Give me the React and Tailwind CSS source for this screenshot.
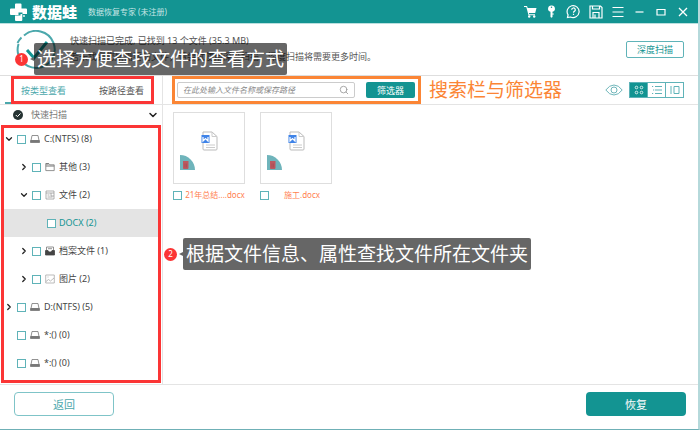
import clsx from "clsx";
import { ChevronDown, ChevronRight, Search } from "lucide-react";

const tree = [
  { id: "c", label: "C:(NTFS) (8)", icon: "disk", level: 0, arrow: "down" },
  { id: "other", label: "其他 (3)", icon: "folder", level: 1, arrow: "right" },
  { id: "file", label: "文件 (2)", icon: "file", level: 1, arrow: "down" },
  { id: "docx", label: "DOCX (2)", level: 2, active: true },
  { id: "archive", label: "档案文件 (1)", icon: "archive", level: 1, arrow: "right" },
  { id: "image", label: "图片 (2)", icon: "image", level: 1, arrow: "right" },
  { id: "d", label: "D:(NTFS) (5)", icon: "disk", level: 0, arrow: "right" },
  { id: "x1", label: "*:() (0)", icon: "disk", level: 0 },
  { id: "x2", label: "*:() (0)", icon: "disk", level: 0 },
];

const files = [
  { id: "f1", name: "21年总结....docx" },
  { id: "f2", name: "施工.docx" },
];

function Logo() {
  return (
    <svg className="h-5 w-5 shrink-0" viewBox="0 0 20 20" fill="#fff">
      <path d="M7 1.500h4.500a1 1 0 0 1 1 1v4H17a1 1 0 0 1 1 1v4.500h-4.500v-1.500H9.500V13H2a1 1 0 0 1-1-1V7.500a1 1 0 0 1 1-1h4v-4a1 1 0 0 1 1-1z" />
      <path d="M6 13.500h5.500V12h1.800v6a1 1 0 0 1-1 1H7a1 1 0 0 1-1-1z" />
      <circle cx="15" cy="14" r="0.900" />
    </svg>
  );
}

function TreeIcon({ name }) {
  return (
    <svg className="h-[10px] w-[10px] shrink-0" viewBox="0 0 10 10" fill="none" stroke="#777" strokeWidth="0.8">
      {name === "disk" && (
        <>
          <path d="M2 1.500h6l1 5h-8z" />
          <path d="M0.500 6.500h9v2h-9z" fill="#777" />
        </>
      )}
      {name === "folder" && (
        <>
          <path d="M0.800 8.600v-7h3l1 1.200h4.400v5.800z" />
          <path d="M0.800 4h8.400M0.800 1.800h3" strokeWidth="1.200" />
        </>
      )}
      {name === "file" && (
        <>
          <path d="M1 1h8v8h-8zM1 3h8" stroke="#999" />
          <path d="M2.500 5h2M2.500 7h5M6 3v3h3" stroke="#999" />
        </>
      )}
      {name === "archive" && (
        <>
          <path d="M1.500 4.500v-3.500h7v3.500M3 2.700h4" />
          <path d="M0.500 4.500h2.500l1 1.500h2l1-1.500h2.500v4.500h-9z" fill="#444" stroke="#444" />
        </>
      )}
      {name === "image" && (
        <>
          <path d="M0.700 1h8.600v8h-8.600z" stroke="#aaa" />
          <path d="M1 7.500l2.500-2 2 1.500 3.500-3M2.500 3h1" stroke="#aaa" />
        </>
      )}
    </svg>
  );
}

function CheckBox({ label }) {
  return (
    <input
      type="checkbox"
      aria-label={label}
      className="h-[9px] w-[9px] shrink-0 appearance-none border border-[#5fb3b8] bg-white checked:bg-[#139492]"
    />
  );
}

function TreeRow({ item }) {
  return (
    <li
      className={clsx(
        "flex h-7 items-center",
        item.level === 1 && "pl-[15px]",
        item.level === 2 && "pl-[30px]",
        item.active && "bg-[#e4e4e4]"
      )}
    >
      <span className="flex w-[13px] shrink-0 items-center text-[#222]">
        {item.arrow === "down" && <ChevronDown size={10} strokeWidth={3} />}
        {item.arrow === "right" && <ChevronRight size={10} strokeWidth={3} />}
      </span>
      <label className="flex items-center">
        <CheckBox label={item.label} />
        {item.icon && (
          <span className="ml-1">
            <TreeIcon name={item.icon} />
          </span>
        )}
        <span className={clsx("text-[9px] leading-3", item.icon ? "ml-1" : "ml-[3px]", item.active ? "text-[#139492]" : "text-[#444]")}>
          {item.label}
        </span>
      </label>
    </li>
  );
}

function WordFile() {
  return (
    <svg className="h-5 w-[17px]" viewBox="0 0 17 20" fill="none">
      <path d="M2 1h9l5 4.500V18a1 1 0 0 1-1 1H3a1 1 0 0 1-1-1z" fill="#fff" stroke="#bbb" />
      <path d="M11 1v4.500h5M5 14h9M5 16.500h9" stroke="#ccc" />
      <rect x="0.500" y="4" width="8" height="8" fill="#3f83e8" />
      <path d="M2 6v4l2.500-2.500L7 10V6" stroke="#fff" strokeWidth="1.200" />
    </svg>
  );
}

function FileCard({ file }) {
  return (
    <li className="w-[72px]">
      <div className="relative flex h-[72px] items-center justify-center border border-[#dedede] bg-white pb-[14px]">
        <WordFile />
        <svg className="absolute bottom-[13px] left-[6px] h-[15px] w-[15px]" viewBox="0 0 15 15">
          <path d="M0 0a15 15 0 0 1 15 15H0z" fill="#6fb4bb" />
          <path d="M3.500 7h4.500v6.500H3.500zM3 6.500h5.500" fill="#bd5960" stroke="#bd5960" />
          <path d="M5 8.500v4M6.600 8.500v4" stroke="#a3474f" strokeWidth="0.600" />
        </svg>
      </div>
      <label className="mt-[5px] flex items-center gap-[3px]">
        <CheckBox label={file.name} />
        <span className="min-w-0 flex-1 whitespace-nowrap text-center text-[8px] leading-3 text-[#ff7f50]">{file.name}</span>
      </label>
    </li>
  );
}

function WindowButtons() {
  const button = "flex h-5 items-center justify-center";
  return (
    <div className="flex items-center gap-2 pr-[10px]">
      <button aria-label="购物车" className={button}>
        <svg className="h-[13px] w-[13px]" viewBox="0 0 13 13" fill="#fff">
          <path d="M0 1h3l.7 2H12.500l-1.300 5H4.800l.5 1.200H11v1H4.500L2.300 2H0z" />
          <circle cx="5.200" cy="11.500" r="1.200" />
          <circle cx="10.200" cy="11.500" r="1.200" />
        </svg>
      </button>
      <button aria-label="注册" className={button}>
        <svg className="h-[13px] w-[13px]" viewBox="0 0 13 13" fill="#fff">
          <path fillRule="evenodd" d="M6.500.5a3.200 3.200 0 0 1 1 6.300V12l-1 .8-1-.8V6.800a3.200 3.200 0 0 1 1-6.300zm0 1a.7.7 0 0 0 0 1.500.7.7 0 0 0 0-1.500z" />
          <path d="M7 8.500h1.800v1H7z" />
        </svg>
      </button>
      <button aria-label="帮助" className={button}>
        <svg className="h-[15px] w-[15px]" viewBox="0 0 15 15" fill="none" stroke="#fff" strokeWidth="1.200">
          <path d="M1.500 13.500l.6-2.600a6 6 0 1 1 2.400 2.100z" />
          <path d="M5.700 5.800a1.800 1.800 0 1 1 2.600 1.600q-.8.400-.8 1.300M7.500 9.800v1.200" />
        </svg>
      </button>
      <button aria-label="保存" className={button}>
        <svg className="h-[14px] w-[14px]" viewBox="0 0 14 14" fill="none" stroke="#fff" strokeWidth="1.200">
          <path d="M1 1h10.500L13 2.500V13H1zM4 13V7.500h6V13M3.500 1v3h7V1M6 9.500V13" />
        </svg>
      </button>
      <button aria-label="菜单" className={clsx(button, "ml-px")}>
        <svg className="h-3 w-3" viewBox="0 0 12 12" stroke="#fff" strokeWidth="1.200">
          <path d="M.5 1.500h11M.5 6h11M.5 10.500h11" />
        </svg>
      </button>
      <button aria-label="最小化" className={clsx(button, "ml-[3px]")}>
        <svg className="h-[10px] w-[9px]" viewBox="0 0 9 10" stroke="#fff" strokeWidth="1.200">
          <path d="M.5 5h8" />
        </svg>
      </button>
      <button aria-label="最大化" className={clsx(button, "ml-1")}>
        <svg className="h-[10px] w-[10px]" viewBox="0 0 10 10" fill="none" stroke="#fff" strokeWidth="1.200">
          <path d="M1 2.500h8v5.500H1z" />
        </svg>
      </button>
      <button aria-label="关闭" className={clsx(button, "ml-1")}>
        <svg className="h-[10px] w-[10px]" viewBox="0 0 10 10" stroke="#fff" strokeWidth="1.300">
          <path d="M1 1l8 8M9 1l-8 8" />
        </svg>
      </button>
    </div>
  );
}

function ViewButtons() {
  return (
    <div className="flex items-center gap-[6px]">
      <button aria-label="预览">
        <svg className="h-3 w-[18px]" viewBox="0 0 18 12" fill="none" stroke="#6fb6ba">
          <path d="M.8 6Q4.500 1 9 1t8.200 5Q13.500 11 9 11T.8 6z" />
          <circle cx="9" cy="6" r="3" />
        </svg>
      </button>
      <div className="flex h-4 divide-x divide-[#5fb3b8] border border-[#5fb3b8]">
        <button aria-label="图标视图" className="flex w-[18px] items-center justify-center bg-[#139492]">
          <svg className="h-[10px] w-[10px]" viewBox="0 0 10 10" fill="none" stroke="#d8eeee">
            <circle cx="2.500" cy="2.500" r="1.300" />
            <circle cx="7.500" cy="2.500" r="1.300" />
            <circle cx="2.500" cy="7.500" r="1.300" />
            <circle cx="7.500" cy="7.500" r="1.300" />
          </svg>
        </button>
        <button aria-label="列表视图" className="flex w-[18px] items-center justify-center">
          <svg className="h-[10px] w-[10px]" viewBox="0 0 10 10" stroke="#5fb3b8">
            <path d="M0 1.500h1.200M3 1.500h7M1 5h1.200M3 5h7M0 8.500h1.200M3 8.500h7" />
          </svg>
        </button>
        <button aria-label="详情视图" className="flex w-[17px] items-center justify-center">
          <svg className="h-[10px] w-[10px]" viewBox="0 0 10 10" fill="none" stroke="#5fb3b8">
            <path d="M1 1v8M4 1.500h5v7H4z" />
          </svg>
        </button>
      </div>
    </div>
  );
}

// numbered callout: red dot and a dark caption beside it
function Callout({ number, text, className }) {
  return (
    <div className={clsx("absolute z-10 flex items-center", className)}>
      <span className="flex h-[13px] w-[13px] items-center justify-center rounded-full bg-[#fb3535] text-[8px] leading-none text-white">{number}</span>
      <span className="ml-[2px] h-0 w-0 border-y-2 border-r-4 border-y-transparent border-r-[#666]" />
      <span className="rounded-xs bg-black/60 px-[3px] text-[19px] leading-8 whitespace-nowrap text-white">{text}</span>
    </div>
  );
}

export default function App() {
  return (
    <div className="relative flex min-h-screen flex-col border-r-2 border-b border-r-[#b5d9db] border-b-[#6fb0b6] bg-white font-['Noto_Sans','Noto_Sans_CJK_SC',sans-serif] text-[#333]">
      <header className="flex h-6 items-center justify-between border-b border-[#b9e0df] bg-[#139492] pl-[9px]">
        <div className="flex items-center text-white">
          <Logo />
          <h1 className="ml-[3px] text-[15px] leading-5 font-black">数据蛙</h1>
          <span className="ml-[11px] text-[8px] leading-3 text-[#c8e6e6]">数据恢复专家 (未注册)</span>
        </div>
        <WindowButtons />
      </header>

      <section className="flex h-[52px] items-center border-b border-[#dedede] pr-[14px] pl-4">
        <svg className="h-10 w-10 shrink-0" viewBox="0 0 40 40" fill="none" stroke="#4ba8ac" strokeWidth="2">
          <path d="M8 5.500A18.500 18.500 0 1 1 2.500 14M1.500 13A19 19 0 0 1 5.500 7.500" />
          <path d="M11 20l7 8 13-16" stroke="#139492" strokeWidth="3" />
        </svg>
        <div className="ml-[14px] flex-1 pb-[2px] text-[9px] leading-4 text-[#555]">
          <p>快速扫描已完成, 已找到 13 个文件 (35.3 MB)</p>
          <p>若未找到您所需要的文件，请尝试使用深度扫描，深度扫描将需要更多时间。</p>
        </div>
        <button className="h-[17px] w-[58px] rounded-xs border border-[#5fb3b8] text-[9px] leading-none text-[#139492]">深度扫描</button>
      </section>

      <div className="flex flex-1">
        <aside className="flex w-[163px] shrink-0 flex-col border-r border-[#e4e4e4]">
          <div className="flex h-[29px] items-end border-b border-[#e4e4e4] pr-2 pl-[5px]">
            <span className="h-[2px] w-[6px] bg-[#4ba8ac]" />
            <div className="flex h-7 flex-1 items-center justify-between border-3 border-[#fb3535] px-[7px] pt-[2px] text-[9px]">
              <button className="text-[#4ba8ac]">按类型查看</button>
              <button className="text-[#555]">按路径查看</button>
            </div>
          </div>
          <button className="flex h-5 items-center pr-[3px] pl-[13px] text-[9px] text-[#777]">
            <svg className="h-[10px] w-[10px]" viewBox="0 0 10 10" fill="none">
              <circle cx="5" cy="5" r="5" fill="#263333" />
              <path d="M2.800 5l1.600 1.600L7.500 3.500" stroke="#fff" />
            </svg>
            <span className="ml-2 flex-1 text-left">快速扫描</span>
            <ChevronDown size={12} strokeWidth={3} color="#222" />
          </button>
          <ul className="mr-px mb-px ml-px flex-1 px-[3px] pb-1 inset-ring-3 inset-ring-[#fb3535]">
            {tree.map((item) => (
              <TreeRow key={item.id} item={item} />
            ))}
          </ul>
        </aside>

        <main className="min-w-0 flex-1">
          <div className="flex h-[29px] items-center border-b border-[#e4e4e4] pr-[14px] pl-[9px]">
            <div className="flex h-7 w-[249px] items-center justify-between border-3 border-[#fb8535] pr-[3px] pl-[2px]">
              <label className="flex h-4 w-[178px] items-center rounded-xs border border-[#ccc] px-[5px]">
                <input
                  type="text"
                  aria-label="搜索文件"
                  placeholder="在此处输入文件名称或保存路径"
                  className="min-w-0 flex-1 text-[8px] italic outline-none placeholder:text-[#888]"
                />
                <Search size={10} color="#999" />
              </label>
              <button className="h-4 w-[49px] rounded-xs bg-[#139492] text-[9px] leading-none text-white">筛选器</button>
            </div>
            <span className="ml-2 flex-1 text-[19px] leading-7 whitespace-nowrap text-[#fb8535]">搜索栏与筛选器</span>
            <ViewButtons />
          </div>
          <ul className="flex gap-[15px] pt-[7px] pl-[10px]">
            {files.map((file) => (
              <FileCard key={file.id} file={file} />
            ))}
          </ul>
        </main>
      </div>

      <footer className="flex h-[45px] items-start justify-between border-t border-[#e4e4e4] pt-[7px] pr-3 pl-[14px]">
        <button className="h-6 w-[100px] rounded-sm border border-[#7fc4c8] text-[11px] leading-none text-[#4ba8ac]">返回</button>
        <button className="h-6 w-[100px] rounded-sm bg-[#139492] text-[11px] leading-none text-white">恢复</button>
      </footer>

      <Callout number={1} text="选择方便查找文件的查看方式" className="top-[43px] left-[15px]" />
      <Callout number={2} text="根据文件信息、属性查找文件所在文件夹" className="top-[238px] left-[164px]" />
    </div>
  );
}
